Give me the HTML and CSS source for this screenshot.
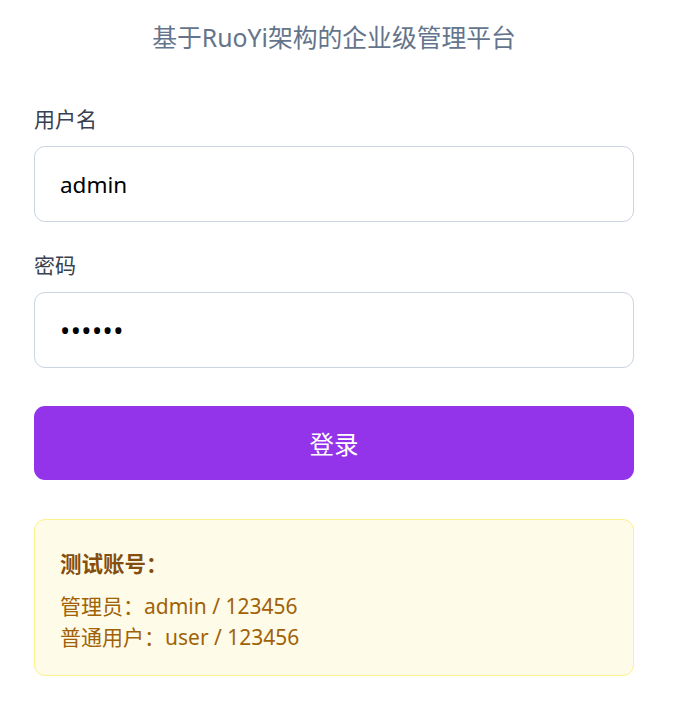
FILE: index.html
```html
<!DOCTYPE html>
<html lang="zh-CN">
<head>
<meta charset="utf-8">
<title>登录</title>
<link rel="stylesheet" href="styles.css">
</head>
<body>
<div class="page">
  <h1 class="title">基于RuoYi架构的企业级管理平台</h1>
  <form class="form">
    <label class="label" for="u">用户名</label>
    <input class="input" id="u" type="text" value="admin">
    <label class="label label-pw" for="p">密码</label>
    <input class="input input-pw" id="p" type="password" value="123456">
    <button class="btn" type="button">登录</button>
  </form>
  <div class="tips">
    <div class="tips-title">测试账号：</div>
    <div class="tips-line first">管理员：admin / 123456</div>
    <div class="tips-line">普通用户：user / 123456</div>
  </div>
</div>
</body>
</html>
```
FILE: styles.css
```css
* { box-sizing: border-box; }
html, body { margin: 0; padding: 0; background: #ffffff; }
body {
  font-family: "Noto Sans", "Noto Sans CJK SC", sans-serif;
}
.page {
  width: 600px;
  margin-left: 34px;
  display: flex;
  flex-direction: column;
}
.title {
  margin: 21px 0 0;
  font-size: 24.8px;
  line-height: 32px;
  font-weight: 400;
  color: #64748b;
  text-align: center;
}
.form {
  display: flex;
  flex-direction: column;
  margin-top: 51px;
}
.label {
  font-size: 21px;
  line-height: 30px;
  color: #374151;
  margin-bottom: 12px;
}
.label-pw { margin-top: 28px; }
.input {
  height: 76px;
  width: 100%;
  border: 1px solid #cbd5e1;
  border-radius: 11px;
  padding: 0 25px;
  font-family: "Noto Sans", "Noto Sans CJK SC", sans-serif;
  font-size: 22.5px;
  color: #000000;
  background: #ffffff;
  outline: none;
}
.input-pw {
  font-size: 27px;
  letter-spacing: 0.5px;
}
.btn {
  margin-top: 38px;
  height: 74px;
  width: 100%;
  border: none;
  border-radius: 11px;
  background: #9333ea;
  color: #ffffff;
  font-family: "Noto Sans CJK SC", "Noto Sans", sans-serif;
  font-size: 24.5px;
  cursor: pointer;
}
.tips {
  margin-top: 39px;
  height: 157px;
  border: 1px solid #fef08a;
  border-radius: 11px;
  background: #fefce8;
  padding: 28px 25px 0;
}
.tips-title {
  font-size: 21.5px;
  line-height: 30px;
  font-weight: 700;
  color: #854d0e;
  font-family: "Noto Sans CJK SC", sans-serif;
}
.tips-line {
  font-size: 21px;
  line-height: 31px;
  color: #a16207;
}
.tips-line.first { margin-top: 13px; }
```
